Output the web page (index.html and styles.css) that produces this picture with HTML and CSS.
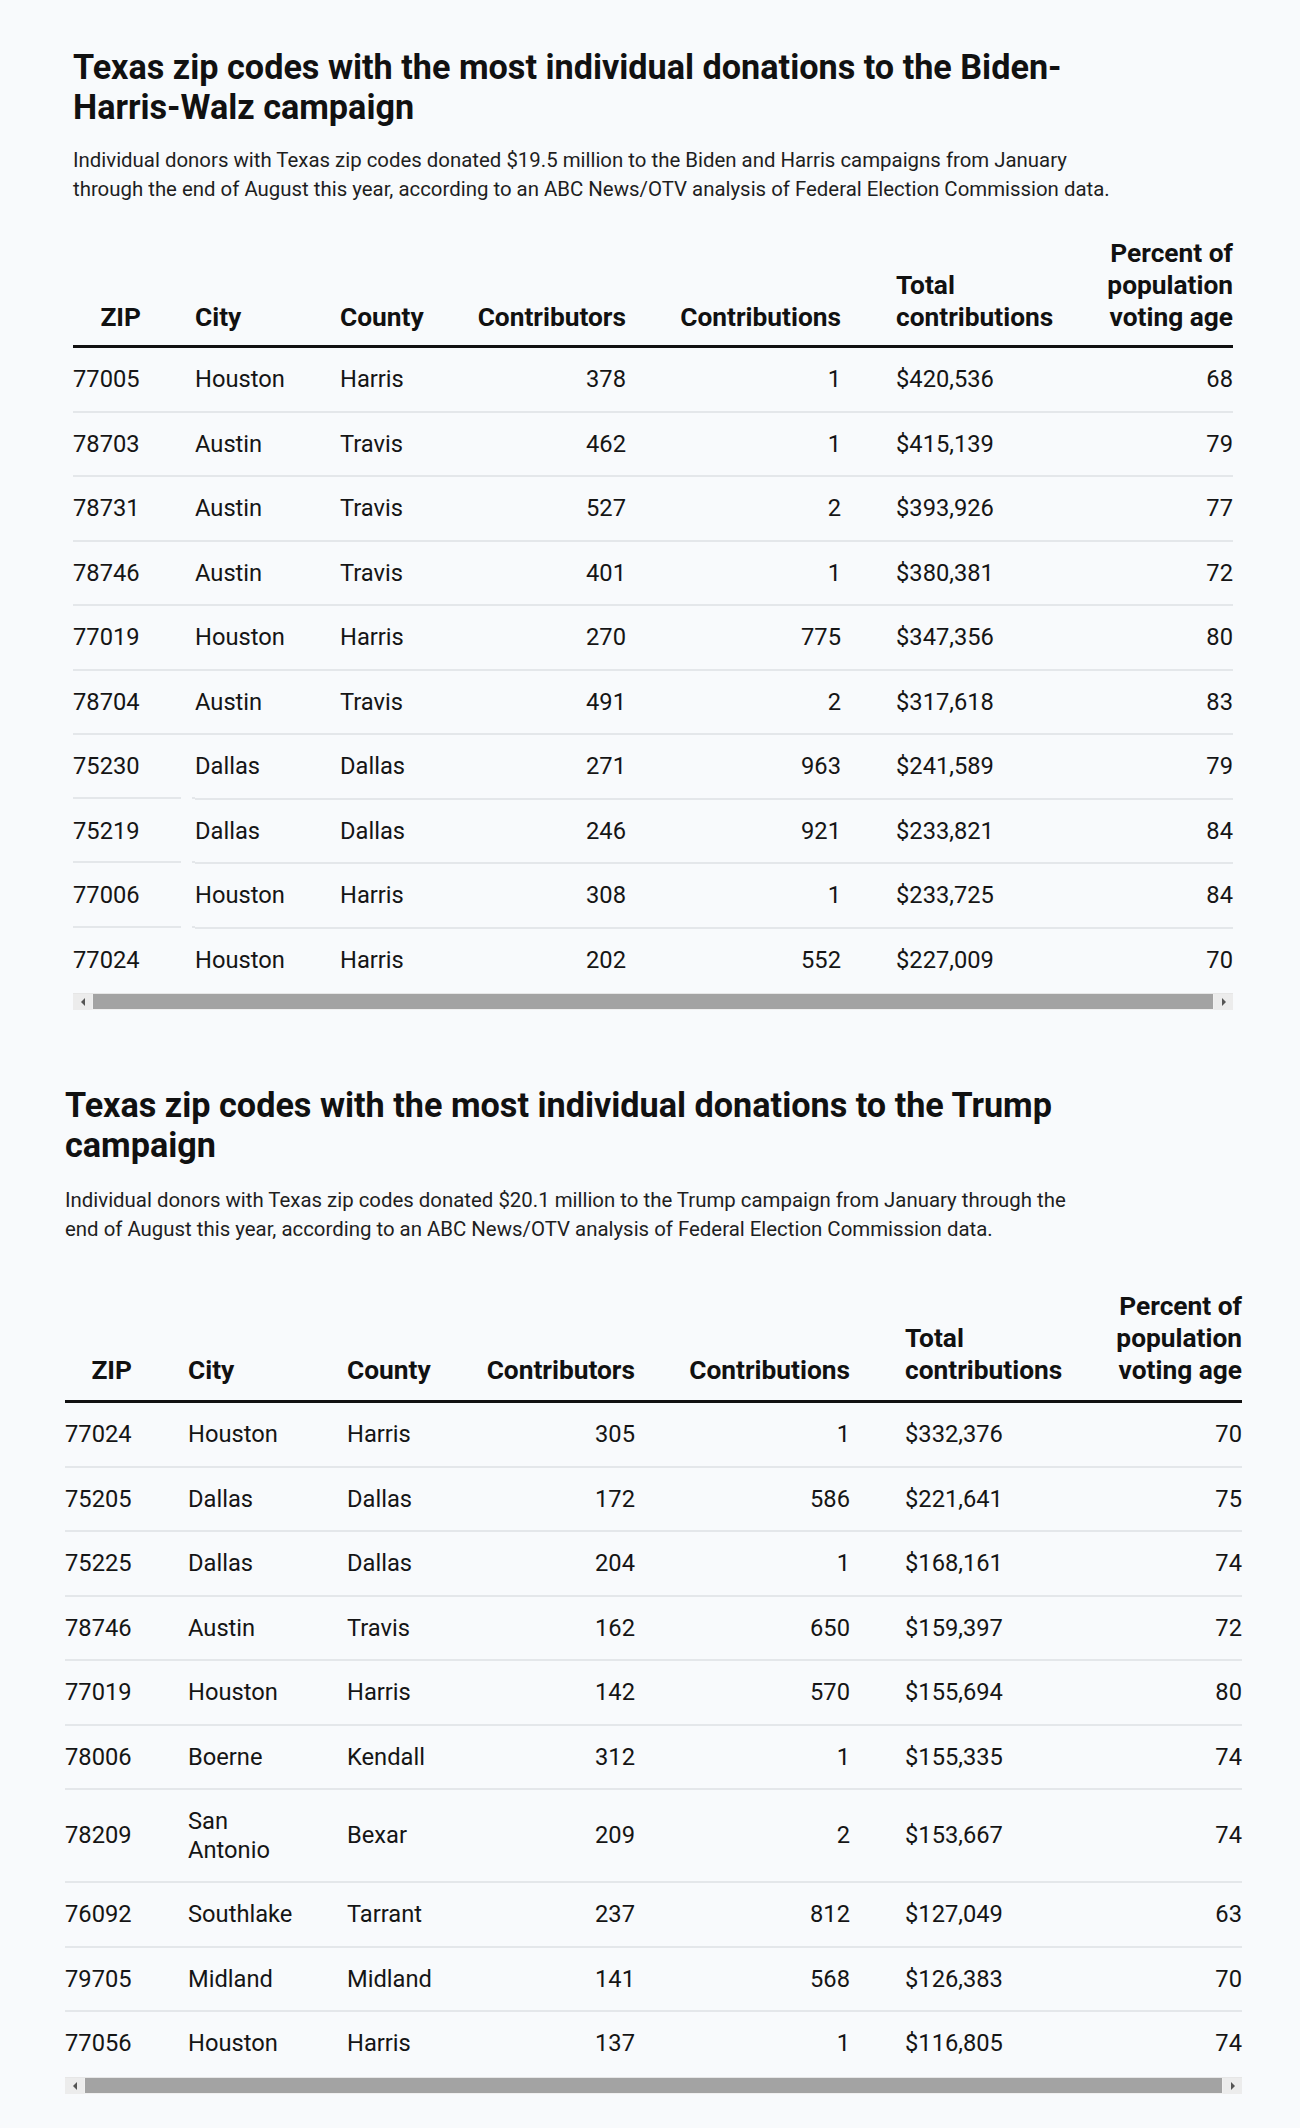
FILE: index.html
```html
<!DOCTYPE html>
<html lang="en">
<head>
<meta charset="utf-8">
<title>Texas zip codes donations</title>
<link rel="stylesheet" href="styles.css">
</head>
<body>
<main class="page">
  <section class="embed embed-one">
    <h1 class="title">Texas zip codes with the most individual donations to the Biden-Harris-Walz campaign</h1>
    <p class="desc">Individual donors with Texas zip codes donated $19.5 million to the Biden and Harris campaigns from January through the end of August this year, according to an ABC News/OTV analysis of Federal Election Commission data.</p>
    <table class="data data-one">
      <colgroup>
        <col class="c-zip"><col class="c-city"><col class="c-county"><col class="c-contributors"><col class="c-contributions"><col class="c-total"><col class="c-pct">
      </colgroup>
      <thead>
        <tr>
          <th class="zip">ZIP</th>
          <th class="left">City</th>
          <th class="left">County</th>
          <th class="right">Contributors</th>
          <th class="right">Contributions</th>
          <th class="left total">Total<br>contributions</th>
          <th class="right">Percent of<br>population<br>voting age</th>
        </tr>
      </thead>
      <tbody>
        <tr><td>77005</td><td>Houston</td><td>Harris</td><td class="right">378</td><td class="right">1</td><td class="total">$420,536</td><td class="right">68</td></tr>
        <tr><td>78703</td><td>Austin</td><td>Travis</td><td class="right">462</td><td class="right">1</td><td class="total">$415,139</td><td class="right">79</td></tr>
        <tr><td>78731</td><td>Austin</td><td>Travis</td><td class="right">527</td><td class="right">2</td><td class="total">$393,926</td><td class="right">77</td></tr>
        <tr><td>78746</td><td>Austin</td><td>Travis</td><td class="right">401</td><td class="right">1</td><td class="total">$380,381</td><td class="right">72</td></tr>
        <tr><td>77019</td><td>Houston</td><td>Harris</td><td class="right">270</td><td class="right">775</td><td class="total">$347,356</td><td class="right">80</td></tr>
        <tr><td>78704</td><td>Austin</td><td>Travis</td><td class="right">491</td><td class="right">2</td><td class="total">$317,618</td><td class="right">83</td></tr>
        <tr class="split"><td>75230</td><td>Dallas</td><td>Dallas</td><td class="right">271</td><td class="right">963</td><td class="total">$241,589</td><td class="right">79</td></tr>
        <tr class="split"><td>75219</td><td>Dallas</td><td>Dallas</td><td class="right">246</td><td class="right">921</td><td class="total">$233,821</td><td class="right">84</td></tr>
        <tr class="split"><td>77006</td><td>Houston</td><td>Harris</td><td class="right">308</td><td class="right">1</td><td class="total">$233,725</td><td class="right">84</td></tr>
        <tr><td>77024</td><td>Houston</td><td>Harris</td><td class="right">202</td><td class="right">552</td><td class="total">$227,009</td><td class="right">70</td></tr>
      </tbody>
    </table>
    <div class="scrollbar">
      <span class="sb-btn"><span class="arrow-left"></span></span>
      <span class="sb-thumb"></span>
      <span class="sb-btn"><span class="arrow-right"></span></span>
    </div>
  </section>

  <section class="embed embed-two">
    <h1 class="title">Texas zip codes with the most individual donations to the Trump campaign</h1>
    <p class="desc">Individual donors with Texas zip codes donated $20.1 million to the Trump campaign from January through the end of August this year, according to an ABC News/OTV analysis of Federal Election Commission data.</p>
    <table class="data data-two">
      <colgroup>
        <col class="c-zip"><col class="c-city"><col class="c-county"><col class="c-contributors"><col class="c-contributions"><col class="c-total"><col class="c-pct">
      </colgroup>
      <thead>
        <tr>
          <th class="zip">ZIP</th>
          <th class="left">City</th>
          <th class="left">County</th>
          <th class="right">Contributors</th>
          <th class="right">Contributions</th>
          <th class="left total">Total<br>contributions</th>
          <th class="right">Percent of<br>population<br>voting age</th>
        </tr>
      </thead>
      <tbody>
        <tr><td>77024</td><td>Houston</td><td>Harris</td><td class="right">305</td><td class="right">1</td><td class="total">$332,376</td><td class="right">70</td></tr>
        <tr><td>75205</td><td>Dallas</td><td>Dallas</td><td class="right">172</td><td class="right">586</td><td class="total">$221,641</td><td class="right">75</td></tr>
        <tr><td>75225</td><td>Dallas</td><td>Dallas</td><td class="right">204</td><td class="right">1</td><td class="total">$168,161</td><td class="right">74</td></tr>
        <tr><td>78746</td><td>Austin</td><td>Travis</td><td class="right">162</td><td class="right">650</td><td class="total">$159,397</td><td class="right">72</td></tr>
        <tr><td>77019</td><td>Houston</td><td>Harris</td><td class="right">142</td><td class="right">570</td><td class="total">$155,694</td><td class="right">80</td></tr>
        <tr><td>78006</td><td>Boerne</td><td>Kendall</td><td class="right">312</td><td class="right">1</td><td class="total">$155,335</td><td class="right">74</td></tr>
        <tr><td>78209</td><td>San<br>Antonio</td><td>Bexar</td><td class="right">209</td><td class="right">2</td><td class="total">$153,667</td><td class="right">74</td></tr>
        <tr><td>76092</td><td>Southlake</td><td>Tarrant</td><td class="right">237</td><td class="right">812</td><td class="total">$127,049</td><td class="right">63</td></tr>
        <tr><td>79705</td><td>Midland</td><td>Midland</td><td class="right">141</td><td class="right">568</td><td class="total">$126,383</td><td class="right">70</td></tr>
        <tr><td>77056</td><td>Houston</td><td>Harris</td><td class="right">137</td><td class="right">1</td><td class="total">$116,805</td><td class="right">74</td></tr>
      </tbody>
    </table>
    <div class="scrollbar">
      <span class="sb-btn"><span class="arrow-left"></span></span>
      <span class="sb-thumb"></span>
      <span class="sb-btn"><span class="arrow-right"></span></span>
    </div>
    <div class="cutoff-pill"></div>
  </section>
</main>
</body>
</html>
```

FILE: styles.css
```css
html, body {
  margin: 0;
  padding: 0;
  background: #f8fafc;
}

body {
  font-family: Roboto, "Liberation Sans", Arial, sans-serif;
  color: #121212;
}

.page {
  display: flex;
  flex-direction: column;
}

.embed {
  display: flex;
  flex-direction: column;
  box-sizing: border-box;
}

.embed-one {
  width: 1160px;
  margin-left: 73px;
  padding-top: 47px;
}

.embed-two {
  width: 1177px;
  margin-left: 65px;
  padding-top: 75px;
}

.title {
  margin: 0;
  max-width: 1020px;
  font-size: 34.2px;
  line-height: 40px;
  font-weight: 700;
  color: #111;
  letter-spacing: 0;
}

.desc {
  margin: 19px 0 0;
  font-size: 20.4px;
  line-height: 28.5px;
  color: #1e1e1e;
}

.embed-one .desc {
  max-width: 1058px;
}

.embed-two .desc {
  margin-top: 21px;
  max-width: 1022px;
}

.data {
  border-collapse: collapse;
  table-layout: fixed;
  width: 100%;
  margin-top: 34px;
}

.embed-two .data {
  margin-top: 47px;
}

.data th {
  font-size: 26.3px;
  line-height: 32px;
  font-weight: 700;
  color: #111;
  vertical-align: bottom;
  padding: 0 0 12px;
  border-bottom: 3px solid #111;
  text-align: left;
}

.embed-two .data th {
  padding-bottom: 14px;
}

.data td {
  font-size: 23.7px;
  line-height: 28.5px;
  color: #151515;
  padding: 17px 0;
  vertical-align: middle;
  border-bottom: 2px solid #e4e7ea;
  text-align: left;
}

.data tbody tr:last-child td {
  border-bottom: 0;
}

.data .right {
  text-align: right;
}

.data .left {
  text-align: left;
}

.data th.zip {
  text-align: right;
}

.data .total {
  padding-left: 55px;
}

/* table 1 column widths */
.data-one .c-zip { width: 122px; }
.data-one .c-city { width: 145px; }
.data-one .c-county { width: 130px; }
.data-one .c-contributors { width: 156px; }
.data-one .c-contributions { width: 215px; }
.data-one .c-total { width: 239px; }
.data-one .c-pct { width: 153px; }
.data-one th.zip { padding-right: 54px; }

/* table 2 column widths */
.data-two .c-zip { width: 123px; }
.data-two .c-city { width: 159px; }
.data-two .c-county { width: 133px; }
.data-two .c-contributors { width: 155px; }
.data-two .c-contributions { width: 215px; }
.data-two .c-total { width: 240px; }
.data-two .c-pct { width: 152px; }
.data-two th.zip { padding-right: 56px; }

/* rows where the divider is broken between ZIP and City */
.data tr.split td:first-child {
  border-bottom-color: transparent;
  background-image: linear-gradient(to right, #e4e7ea 108px, transparent 108px, transparent 119px, #e4e7ea 119px);
  background-origin: border-box;
  background-clip: border-box;
  background-repeat: no-repeat;
  background-position: left bottom;
  background-size: 100% 2px;
}

/* drawn horizontal scrollbar */
.scrollbar {
  display: flex;
  height: 17px;
  margin-top: 2px;
  background: #f0f0f0;
  border-top: 1px solid #e6e6e6;
  box-sizing: border-box;
}

.sb-btn {
  width: 19px;
  display: flex;
  align-items: center;
  justify-content: center;
  background: #ececec;
}

.sb-thumb {
  flex: 1;
  background: #a3a3a3;
  margin: 0 1px 1px;
}

.arrow-left {
  width: 0;
  height: 0;
  border-top: 4px solid transparent;
  border-bottom: 4px solid transparent;
  border-right: 4px solid #555;
}

.arrow-right {
  width: 0;
  height: 0;
  border-top: 4px solid transparent;
  border-bottom: 4px solid transparent;
  border-left: 4px solid #555;
}

.cutoff-pill {
  width: 34px;
  height: 20px;
  margin: 34px 0 0 972px;
  border: 1px solid #e2e4e6;
  border-radius: 6px;
  background: #fbfcfd;
}
```
